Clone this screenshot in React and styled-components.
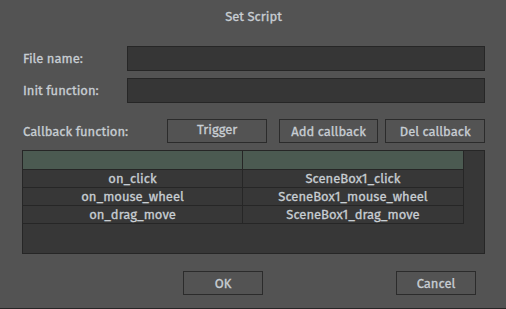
import React from "react";
import styled, { createGlobalStyle } from "styled-components";

const GlobalStyle = createGlobalStyle`
   html, body {
      margin: 0;
      padding: 0;
      background: #535353;
   }
   body {
      font-family: "Fira Sans", "Noto Sans", "Open Sans", sans-serif;
   }
`;

const Dialog = styled.div`
   width: 506px;
   height: 309px;
   box-sizing: border-box;
   background: #535353;
   border-bottom: 1px solid #262626;
   color: #c8ced3;
   font-size: 13px;
   font-weight: 400;
   -webkit-text-stroke: 0.3px #c8ced3;
   display: flex;
   flex-direction: column;
   padding: 0 21px 0 22px;
`;

const Title = styled.div`
   height: 36px;
   display: flex;
   align-items: center;
   justify-content: center;
   padding-bottom: 3px;
   box-sizing: border-box;
`;

const FieldRow = styled.div`
   display: flex;
   align-items: center;
   margin-top: ${(props) => props.top}px;
`;

const Label = styled.div`
   width: 104px;
   padding-left: 1px;
`;

const Input = styled.div`
   flex: 1;
   height: 25px;
   box-sizing: border-box;
   background: #363636;
   border: 1px solid #262626;
`;

const CallbackRow = styled.div`
   display: flex;
   align-items: center;
   margin-top: 16px;
   height: 24px;
`;

const CallbackLabel = styled.div`
   width: 145px;
   padding-left: 1px;
`;

const Button = styled.div`
   width: ${(props) => props.w}px;
   height: 24px;
   box-sizing: border-box;
   border: 1px solid #2b2b2b;
   display: flex;
   align-items: center;
   justify-content: center;
   margin-left: ${(props) => props.gap || 0}px;
   padding-bottom: ${(props) => (props.raised ? 3 : 0)}px;
`;

const Table = styled.div`
   margin-top: 7px;
   height: 104px;
   box-sizing: border-box;
   background: #373737;
   border: 1px solid #262626;
   width: 463px;
`;

const Grid = styled.div`
   width: 441px;
   display: grid;
   grid-template-columns: 220px 221px;
`;

const HeadCell = styled.div`
   height: 18px;
   background: #4b5a51;
   border-right: 1px solid #262626;
   border-bottom: 1px solid #262626;
`;

const Cell = styled.div`
   height: 17px;
   border-right: 1px solid #262626;
   border-bottom: 1px solid #262626;
   display: flex;
   align-items: center;
   justify-content: center;
   line-height: 1;
`;

const Footer = styled.div`
   display: flex;
   margin-top: 17px;
`;

const rows = [
   ["on_click", "SceneBox1_click"],
   ["on_mouse_wheel", "SceneBox1_mouse_wheel"],
   ["on_drag_move", "SceneBox1_drag_move"],
];

const App = () => {
   return (
      <>
         <GlobalStyle />
         <Dialog>
            <Title>Set Script</Title>
            <FieldRow top={10}>
               <Label>File name:</Label>
               <Input />
            </FieldRow>
            <FieldRow top={7}>
               <Label>Init function:</Label>
               <Input />
            </FieldRow>
            <CallbackRow>
               <CallbackLabel>Callback function:</CallbackLabel>
               <Button w={100} raised>Trigger</Button>
               <Button w={100} gap={12}>Add callback</Button>
               <Button w={100} gap={7}>Del callback</Button>
            </CallbackRow>
            <Table>
               <Grid>
                  <HeadCell />
                  <HeadCell />
                  {rows.map(([event, handler]) => (
                     <React.Fragment key={event}>
                        <Cell>{event}</Cell>
                        <Cell>{handler}</Cell>
                     </React.Fragment>
                  ))}
               </Grid>
            </Table>
            <Footer>
               <Button w={80} gap={161}>OK</Button>
               <Button w={80} gap={133}>Cancel</Button>
            </Footer>
         </Dialog>
      </>
   );
};

export default App;
